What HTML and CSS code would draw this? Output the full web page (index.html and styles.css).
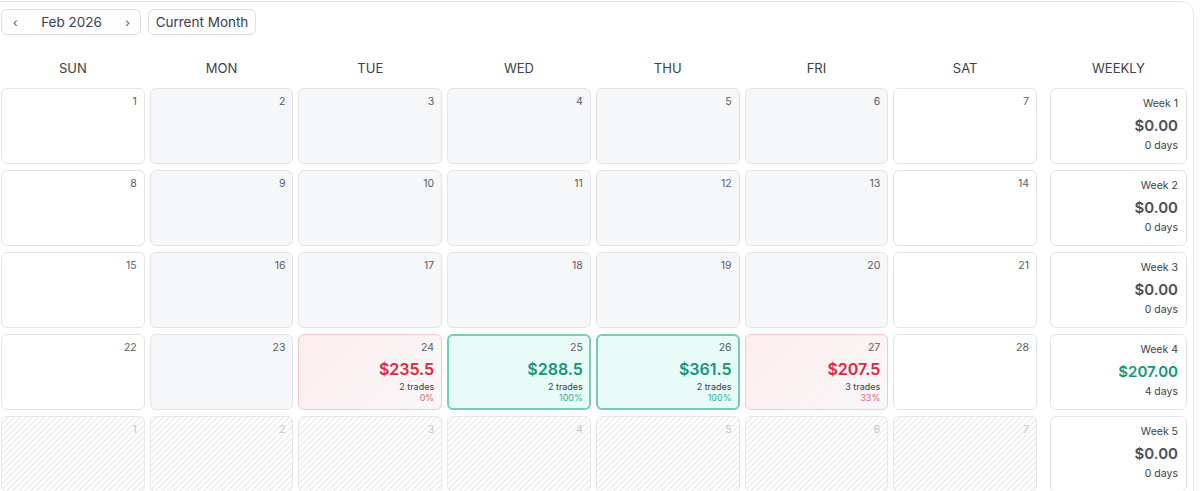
FILE: index.html
```html
<!DOCTYPE html>
<html lang="en">
<head>
<meta charset="utf-8">
<title>Calendar</title>
<link rel="stylesheet" href="styles.css">
</head>
<body>
<div class="panel">
  <div class="nav">
    <div class="btn month"><span class="arrow">‹</span><span>Feb 2026</span><span class="arrow">›</span></div>
    <div class="btn today">Current Month</div>
  </div>
  <div class="heads">
    <div class="head">SUN</div>
    <div class="head">MON</div>
    <div class="head">TUE</div>
    <div class="head">WED</div>
    <div class="head">THU</div>
    <div class="head">FRI</div>
    <div class="head">SAT</div>
    <div class="head weekly">WEEKLY</div>
  </div>
  <div class="grid">
    <div class="cell we"><div class="num">1</div></div>
    <div class="cell"><div class="num">2</div></div>
    <div class="cell"><div class="num">3</div></div>
    <div class="cell"><div class="num">4</div></div>
    <div class="cell"><div class="num">5</div></div>
    <div class="cell"><div class="num">6</div></div>
    <div class="cell we"><div class="num">7</div></div>
    <div class="wk"><div class="wk-label">Week 1</div><div class="wk-val">$0.00</div><div class="wk-days">0 days</div></div>

    <div class="cell we"><div class="num">8</div></div>
    <div class="cell"><div class="num">9</div></div>
    <div class="cell"><div class="num">10</div></div>
    <div class="cell"><div class="num">11</div></div>
    <div class="cell"><div class="num">12</div></div>
    <div class="cell"><div class="num">13</div></div>
    <div class="cell we"><div class="num">14</div></div>
    <div class="wk"><div class="wk-label">Week 2</div><div class="wk-val">$0.00</div><div class="wk-days">0 days</div></div>

    <div class="cell we"><div class="num">15</div></div>
    <div class="cell"><div class="num">16</div></div>
    <div class="cell"><div class="num">17</div></div>
    <div class="cell"><div class="num">18</div></div>
    <div class="cell"><div class="num">19</div></div>
    <div class="cell"><div class="num">20</div></div>
    <div class="cell we"><div class="num">21</div></div>
    <div class="wk"><div class="wk-label">Week 3</div><div class="wk-val">$0.00</div><div class="wk-days">0 days</div></div>

    <div class="cell we"><div class="num">22</div></div>
    <div class="cell"><div class="num">23</div></div>
    <div class="cell loss"><div class="num">24</div><div class="val">$235.5</div><div class="trades">2 trades</div><div class="pct">0%</div></div>
    <div class="cell gain"><div class="num">25</div><div class="val">$288.5</div><div class="trades">2 trades</div><div class="pct">100%</div></div>
    <div class="cell gain"><div class="num">26</div><div class="val">$361.5</div><div class="trades">2 trades</div><div class="pct">100%</div></div>
    <div class="cell loss"><div class="num">27</div><div class="val">$207.5</div><div class="trades">3 trades</div><div class="pct">33%</div></div>
    <div class="cell we"><div class="num">28</div></div>
    <div class="wk"><div class="wk-label">Week 4</div><div class="wk-val pos">$207.00</div><div class="wk-days">4 days</div></div>

    <div class="cell off"><div class="num">1</div></div>
    <div class="cell off"><div class="num">2</div></div>
    <div class="cell off"><div class="num">3</div></div>
    <div class="cell off"><div class="num">4</div></div>
    <div class="cell off"><div class="num">5</div></div>
    <div class="cell off"><div class="num">6</div></div>
    <div class="cell off"><div class="num">7</div></div>
    <div class="wk"><div class="wk-label">Week 5</div><div class="wk-val">$0.00</div><div class="wk-days">0 days</div></div>
  </div>
</div>
</body>
</html>
```
FILE: styles.css
```css
html, body {
  margin: 0;
  background: #ffffff;
  overflow: hidden;
}
body {
  height: 491px;
  font-family: Inter, Roboto, "Liberation Sans", sans-serif;
  color: #374151;
}
.panel {
  margin: 1px 6px 0 -15px;
  border: 1px solid #e5e7eb;
  border-radius: 12px;
  padding: 7px 6px 16px 15px;
}
.nav {
  display: flex;
  gap: 7px;
  height: 26px;
}
.btn {
  box-sizing: border-box;
  height: 26px;
  border: 1px solid #dcdee3;
  border-radius: 6px;
  background: #ffffff;
  display: flex;
  align-items: center;
  font-size: 13.5px;
  color: #374151;
}
.month {
  width: 140px;
  justify-content: space-between;
  padding: 0 10px 0 11px;
}
.arrow {
  font-size: 12px;
  color: #4b5563;
}
.today {
  width: 108px;
  justify-content: center;
}
.heads,
.grid {
  display: grid;
  grid-template-columns: repeat(7, 1fr) 145px;
  column-gap: 5px;
}
.heads {
  padding: 23px 0 10px;
}
.head {
  text-align: center;
  font-size: 13px;
  line-height: 20px;
  color: #3b3f46;
}
.head.weekly {
  margin-left: 8px;
}
.grid {
  row-gap: 6px;
  grid-auto-rows: 76px;
}
.cell {
  box-sizing: border-box;
  border: 1px solid #e2e4e8;
  border-radius: 6px;
  background: #f6f7f9;
  padding: 6px 7px;
  text-align: right;
}
.cell.we {
  background: #ffffff;
}
.num {
  font-size: 10.5px;
  line-height: 14px;
  color: #5a5d63;
}
.cell.off {
  background: repeating-linear-gradient(135deg, #ededed 0 1px, #ffffff 1px 4.24px);
  border-color: #e6e7ea;
}
.cell.off .num {
  color: #c4c5c8;
}
.val {
  font-size: 16px;
  font-weight: 600;
  line-height: 22px;
  margin-top: 3px;
}
.trades {
  font-size: 9px;
  line-height: 11px;
  margin-top: 1px;
  color: #3b3f46;
}
.pct {
  font-size: 9px;
  line-height: 11px;
}
.cell.loss {
  background: linear-gradient(135deg, #fdeef0 0%, #f9f7f8 100%);
  border-color: #f9c6cb;
}
.cell.loss .val {
  color: #e5233d;
}
.cell.loss .pct {
  color: #f0646f;
}
.cell.gain {
  background: #e9fbf7;
  border: 2px solid #74cdb6;
  padding: 5px 6px;
}
.cell.gain .val {
  color: #11977a;
}
.cell.gain .pct {
  color: #2fb08f;
}
.wk {
  margin-left: 8px;
  box-sizing: border-box;
  border: 1px solid #e2e4e8;
  border-radius: 6px;
  background: #ffffff;
  padding: 8px 8px;
  text-align: right;
}
.wk-label {
  font-size: 10.5px;
  line-height: 14px;
  color: #3b3f46;
}
.wk-val {
  font-size: 15px;
  font-weight: 600;
  line-height: 20px;
  margin: 5px 0 3px;
  color: #4b5058;
}
.wk-val.pos {
  color: #11977a;
}
.wk-days {
  font-size: 10.5px;
  line-height: 14px;
  color: #3b3f46;
}
```
